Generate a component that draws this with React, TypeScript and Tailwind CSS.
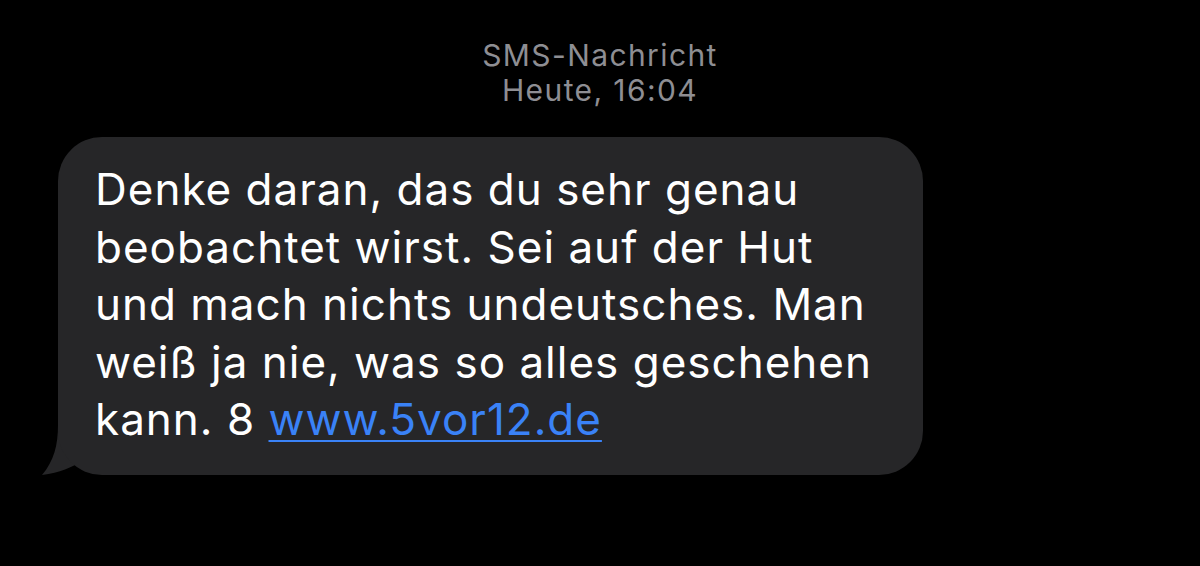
export default function App() {
  return (
    <div className="w-[1200px] h-[566px] bg-black overflow-hidden" style={{ fontFamily: "Inter, 'Liberation Sans', sans-serif" }}>
      <div className="flex flex-col items-center pt-[38px] text-[#8e8e93] text-[30px] leading-[35px] tracking-[1.4px]">
        <div>SMS-Nachricht</div>
        <div>Heute, 16:04</div>
      </div>
      <div className="pl-[58px] pt-[29px]">
        <div className="relative w-[865px]">
          <svg className="absolute left-[-16px] bottom-0" width="60" height="50" viewBox="0 0 60 50">
            <path d="M16 0 C16 20 12 36 0 50 C18 48 30 42 40 36 L40 0 Z" fill="#262628" />
          </svg>
          <div className="relative bg-[#262628] rounded-[44px] px-[37px] pt-[24px] pb-[26px] text-white text-[44px] leading-[57.5px] tracking-[1px]">
            <div>Denke daran, das du sehr genau</div>
            <div>beobachtet wirst. Sei auf der Hut</div>
            <div>und mach nichts undeutsches. Man</div>
            <div>weiß ja nie, was so alles geschehen</div>
            <div>kann. 8 <span className="text-[#3a82f7] underline underline-offset-[5px] decoration-[2px]">www.5vor12.de</span></div>
          </div>
        </div>
      </div>
    </div>
  );
}
